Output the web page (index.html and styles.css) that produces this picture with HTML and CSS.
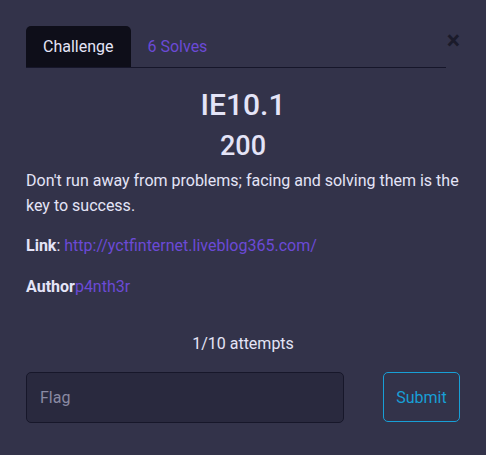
FILE: index.html
```html
<!DOCTYPE html>
<html>
<head>
<meta charset="utf-8">
<link rel="stylesheet" href="styles.css">
</head>
<body>
<div class="modal">
  <div class="header">
    <div class="tabs">
      <div class="tab active">Challenge</div>
      <div class="tab">6 Solves</div>
    </div>
    <button class="close">&times;</button>
  </div>
  <h2 class="title">IE10.1</h2>
  <h3 class="value">200</h3>
  <p class="desc">Don't run away from problems; facing and solving them is the key to success.</p>
  <p class="meta"><strong>Link</strong>: <a href="#">http://yctfinternet.liveblog365.com/</a></p>
  <p class="meta"><strong>Author</strong><a href="#">p4nth3r</a></p>
  <p class="attempts">1/10 attempts</p>
  <div class="submit-row">
    <input class="flag" type="text" placeholder="Flag">
    <button class="submit">Submit</button>
  </div>
</div>
</body>
</html>
```
FILE: styles.css
```css
html, body {
  margin: 0;
  padding: 0;
  background: #33334a;
}
body {
  font-family: Roboto, "Liberation Sans", sans-serif;
  color: #e4e4f7;
  font-size: 16px;
  width: 486px;
  height: 455px;
  overflow: hidden;
}
.modal {
  padding: 26px 26px 0 26px;
}
.header {
  display: flex;
  align-items: flex-start;
}
.tabs {
  flex: 1;
  display: flex;
  border-bottom: 1px solid #16162a;
}
.tab {
  padding: 10px 17px 10px 17px;
  line-height: 21px;
  font-size: 16px;
  color: #6b4ad6;
}
.tab.active {
  background: #0e0e19;
  color: #e4e4f7;
  border-radius: 5px 5px 0 0;
}
.close {
  width: 14px;
  margin-top: 3px;
  padding: 0;
  background: none;
  border: none;
  font-family: Roboto, sans-serif;
  font-size: 25px;
  font-weight: 700;
  line-height: 24px;
  color: #1b1b2b;
  text-align: right;
}
.title {
  margin: 19px 0 0 0;
  text-align: center;
  font-size: 30px;
  font-weight: 500;
  line-height: 36px;
}
.value {
  margin: 7px 0 0 0;
  text-align: center;
  font-size: 27px;
  font-weight: 500;
  line-height: 32px;
}
.desc {
  margin: 6px 0 0 0;
  line-height: 25px;
}
.meta {
  margin: 16px 0 0 0;
  line-height: 24px;
}
.meta + .meta {
  margin-top: 17px;
}
.meta strong {
  font-weight: 700;
}
a {
  color: #6b4ad6;
  text-decoration: none;
}
.attempts {
  text-align: center;
  margin: 33px 0 0 0;
  line-height: 24px;
}
.submit-row {
  display: flex;
  gap: 39px;
  margin-top: 16px;
}
.flag {
  flex: 1;
  height: 51px;
  box-sizing: border-box;
  background: #29293e;
  border: 1px solid #17172a;
  border-radius: 5px;
  padding: 0 13px;
  font-family: Roboto, sans-serif;
  font-size: 16px;
  color: #e4e4f7;
  outline: none;
}
.flag::placeholder {
  color: #8a8aa3;
}
.submit {
  width: 77px;
  height: 50px;
  box-sizing: border-box;
  background: transparent;
  border: 1px solid #189fd6;
  border-radius: 5px;
  color: #189fd6;
  font-family: Roboto, sans-serif;
  font-size: 16px;
  padding: 0;
}
```
